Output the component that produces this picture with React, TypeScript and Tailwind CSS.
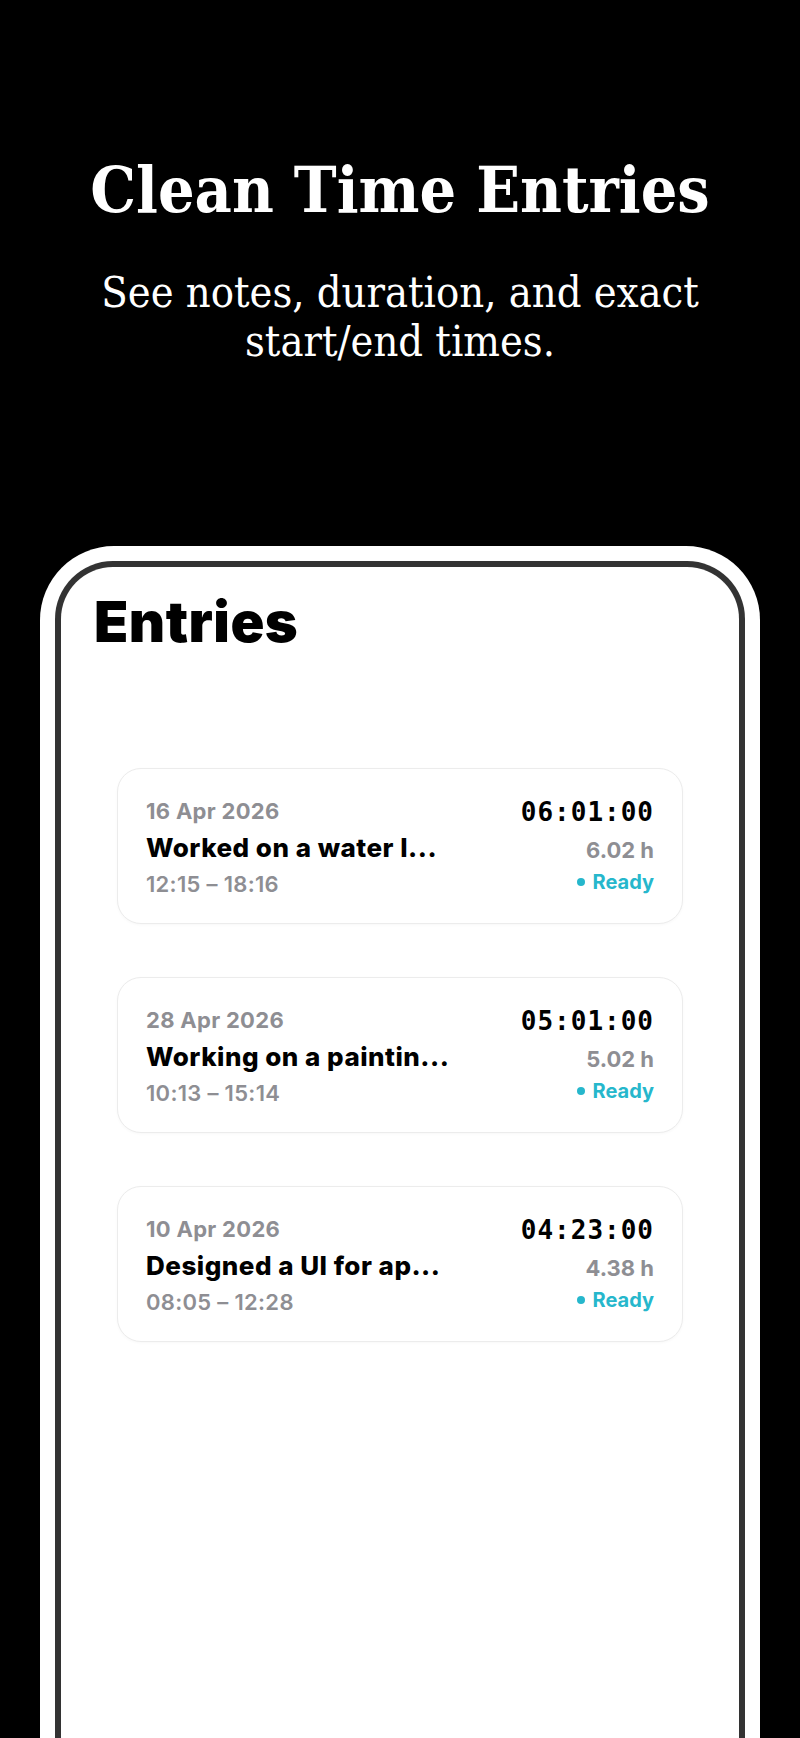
type Entry = {
  date: string;
  note: string;
  range: string;
  duration: string;
  hours: string;
};

const entries: Entry[] = [
  { date: "16 Apr 2026", note: "Worked on a water l...", range: "12:15 – 18:16", duration: "06:01:00", hours: "6.02 h" },
  { date: "28 Apr 2026", note: "Working on a paintin...", range: "10:13 – 15:14", duration: "05:01:00", hours: "5.02 h" },
  { date: "10 Apr 2026", note: "Designed a UI for ap...", range: "08:05 – 12:28", duration: "04:23:00", hours: "4.38 h" },
];

const sans = "font-['Inter','Liberation_Sans',sans-serif]";

function EntryCard({ entry }: { entry: Entry }) {
  return (
    <div className={`mx-auto flex h-[156px] w-[566px] items-start justify-between rounded-[24px] border border-[#ececec] bg-white px-[28px] pt-[28px] shadow-[0_1px_3px_rgba(0,0,0,0.03)] ${sans}`}>
      <div className="mt-[2px] flex flex-col">
        <span className="text-[22px] font-bold leading-[24px] tracking-[0.3px] text-[#8e8e93]">{entry.date}</span>
        <span className="mt-[10px] text-[26px] font-extrabold leading-[30px] tracking-[0.5px] text-black">{entry.note}</span>
        <span className="mt-[9px] text-[22px] font-semibold leading-[24px] tracking-[0.3px] text-[#8e8e93]">{entry.range}</span>
      </div>
      <div className="flex flex-col items-end">
        <span className="font-['DejaVu_Sans_Mono','Liberation_Mono',monospace] text-[26px] font-bold leading-[30px] tracking-[1px] text-black">
          {entry.duration}
        </span>
        <span className="mt-[11px] text-[22px] font-bold leading-[24px] text-[#8e8e93]">{entry.hours}</span>
        <span className="mt-[8px] flex items-center gap-[8px] text-[20px] font-bold leading-[24px] text-[#26b7cc]">
          <span className="size-[8px] rounded-full bg-[#26b7cc]" />
          Ready
        </span>
      </div>
    </div>
  );
}

export default function App() {
  return (
    <div className="flex h-[1738px] w-[800px] flex-col overflow-hidden bg-black">
      <div className="flex flex-col items-center text-center text-white">
        <h1 className="pt-[158px] font-['DejaVu_Serif_Condensed','Liberation_Serif',serif] text-[64px] font-bold leading-none">
          Clean Time Entries
        </h1>
        <p className="mt-[46px] w-[680px] font-['DejaVu_Serif_Condensed','Liberation_Serif',serif] text-[43px] leading-[49px]">
          See notes, duration, and exact start/end times.
        </p>
      </div>

      <div className="mx-auto mt-[180px] flex w-[720px] flex-1 flex-col rounded-t-[74px] bg-white px-[15px] pt-[15px]">
        <div className="flex flex-1 flex-col rounded-t-[58px] border-x-[6px] border-t-[6px] border-[#333333] bg-white">
          <h2 className={`pl-[33px] pt-[27px] text-[56px] font-black leading-none tracking-[0.5px] text-black ${sans}`}>
            Entries
          </h2>
          <div className="mt-[118px] flex flex-col gap-[53px]">
            {entries.map((e) => (
              <EntryCard key={e.date} entry={e} />
            ))}
          </div>
        </div>
      </div>
    </div>
  );
}
